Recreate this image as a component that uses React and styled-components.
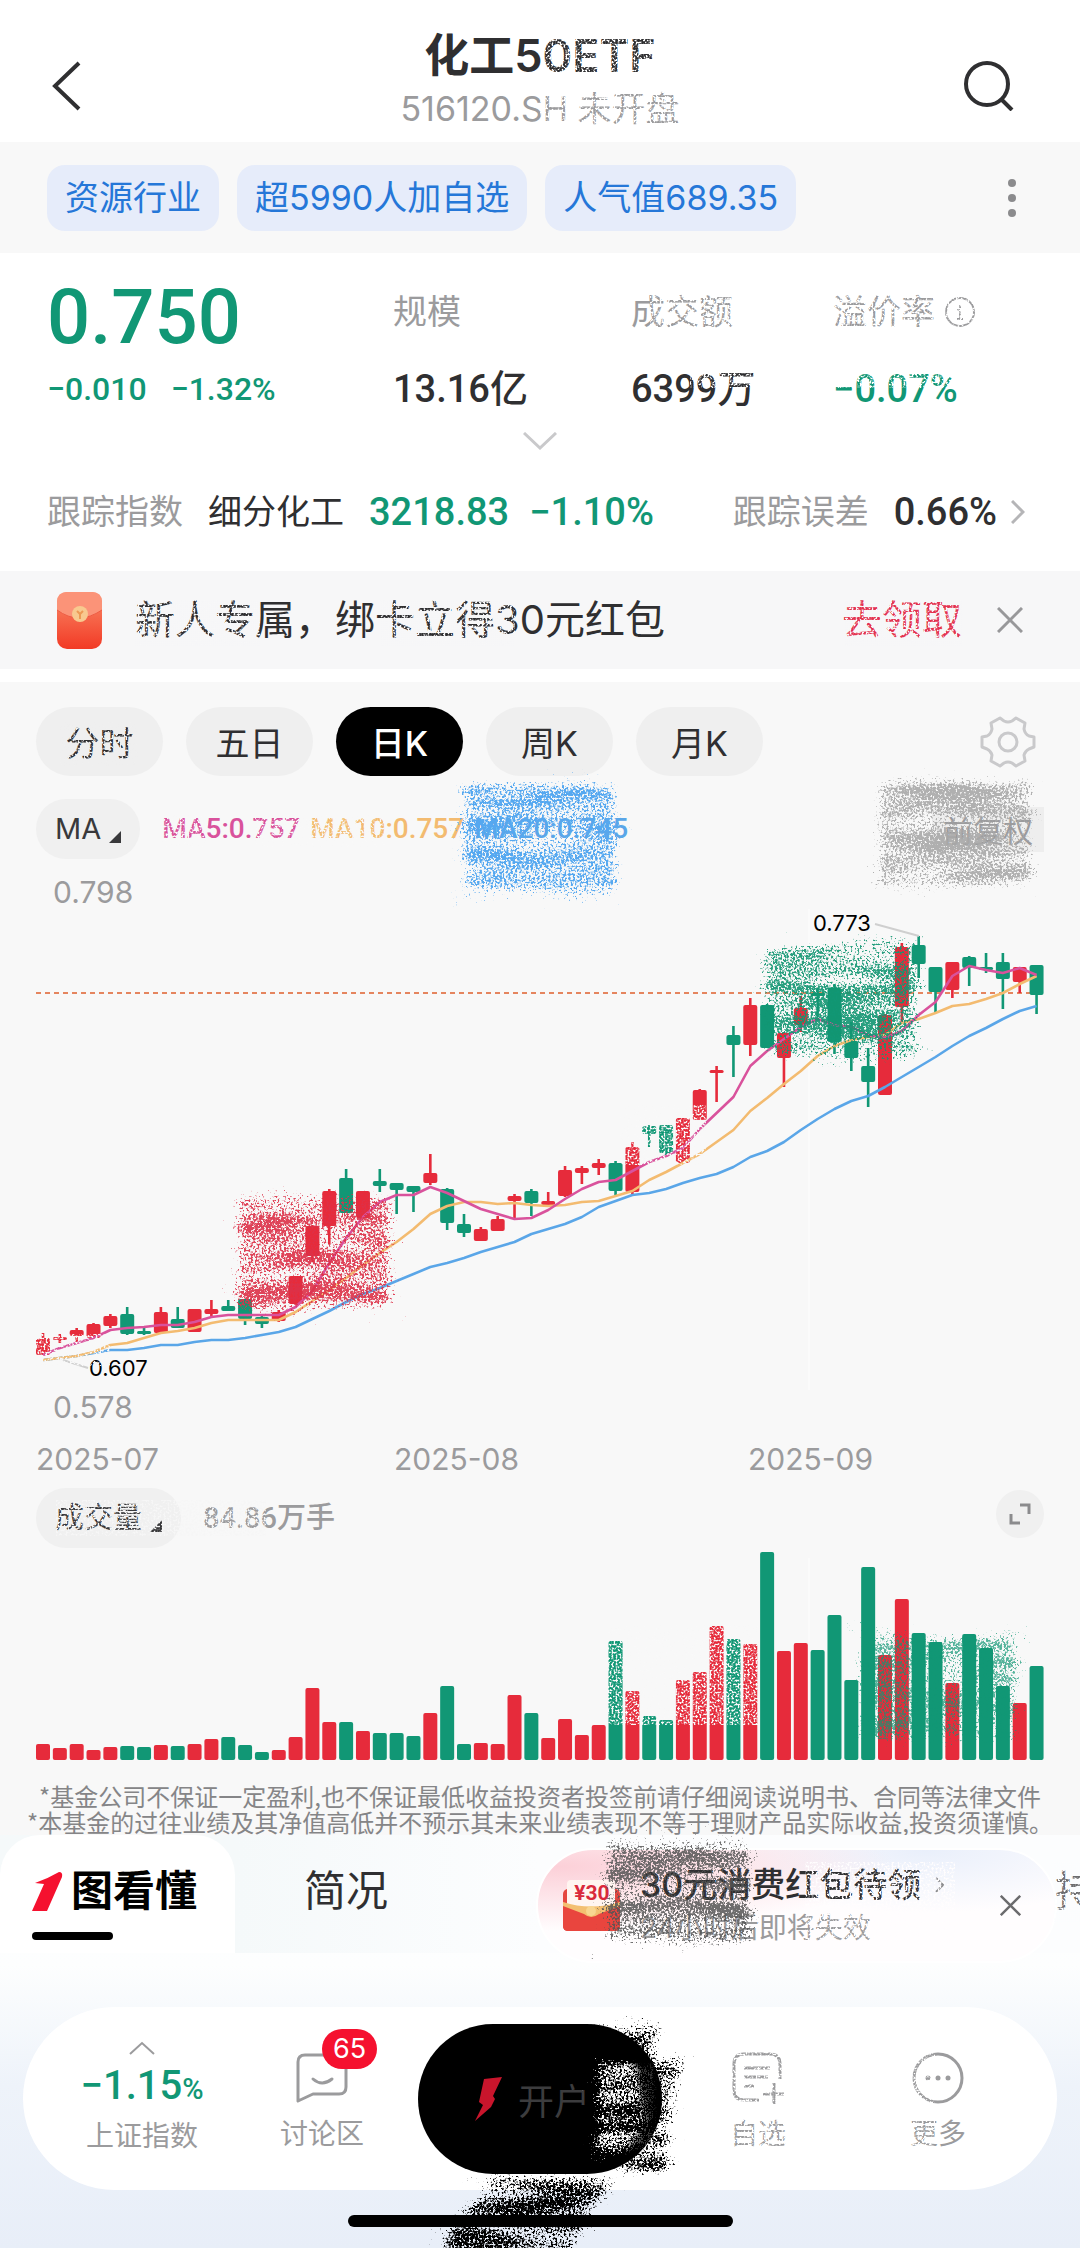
import React from 'react';
import styled, { createGlobalStyle } from 'styled-components';

const RED = '#e62b3b';
const GREEN = '#119775';
const PINK = '#d9529c';
const ORANGE = '#f3bb70';
const BLUE = '#5aa6e8';

const GlobalStyle = createGlobalStyle`
  * { box-sizing: border-box; }
  body {
    margin: 0;
    background: #ffffff;
    color: #2f2f31;
    font-family: Inter, "Noto Sans CJK SC", sans-serif;
  }
  button {
    border: 0;
    padding: 0;
    background: none;
    color: inherit;
    font: inherit;
    cursor: pointer;
  }
  a { color: inherit; text-decoration: none; }
  svg { display: block; flex: none; }
  p, h1, h2 { margin: 0; font-weight: 400; }
`;

// each candle: [up, high, body top, body bottom, low, volume]
const candles = [
  [1, 453, 458, 475, 475, 16], [1, 454, 457, 460, 463, 12], [1, 448, 450, 456, 464, 16],
  [1, 443, 444, 458, 458, 10], [1, 434, 436, 446, 448, 13], [0, 427, 434, 454, 455, 14],
  [0, 448, 451, 454, 455, 13], [1, 427, 432, 453, 453, 15], [0, 427, 439, 448, 448, 14],
  [1, 429, 429, 452, 452, 16], [1, 420, 429, 434, 436, 21], [0, 420, 426, 431, 431, 23],
  [0, 419, 419, 439, 445, 15], [0, 435, 437, 444, 448, 8], [1, 430, 432, 441, 442, 10],
  [1, 396, 396, 424, 424, 23], [1, 345, 346, 376, 382, 72], [1, 309, 311, 346, 364, 38],
  [0, 289, 298, 333, 333, 38], [1, 311, 311, 338, 338, 29], [0, 289, 301, 306, 312, 27],
  [0, 303, 303, 310, 334, 27], [0, 306, 306, 312, 332, 24], [1, 274, 293, 303, 305, 47],
  [0, 308, 309, 343, 350, 74], [0, 334, 344, 353, 357, 16], [1, 347, 349, 361, 361, 17],
  [1, 336, 339, 351, 351, 16], [1, 314, 316, 321, 339, 65], [0, 309, 311, 323, 336, 47],
  [1, 312, 321, 325, 325, 22], [1, 286, 290, 316, 317, 41], [1, 286, 288, 293, 304, 25],
  [1, 279, 283, 288, 295, 35], [0, 281, 283, 311, 315, 119], [1, 262, 267, 312, 315, 69],
  [0, 245, 246, 254, 267, 44], [0, 245, 245, 273, 277, 40], [1, 238, 238, 283, 283, 80],
  [1, 209, 210, 240, 240, 88], [1, 186, 190, 193, 222, 134], [0, 146, 155, 165, 197, 121],
  [1, 118, 125, 165, 176, 116], [0, 124, 125, 168, 168, 208], [1, 152, 153, 178, 207, 109],
  [1, 116, 128, 145, 152, 117], [0, 108, 113, 116, 137, 110], [0, 104, 108, 162, 174, 145],
  [0, 142, 161, 178, 191, 80], [0, 168, 186, 202, 227, 193], [1, 134, 135, 215, 215, 105],
  [1, 63, 67, 127, 142, 161], [0, 56, 65, 84, 98, 127], [0, 87, 87, 112, 133, 118],
  [1, 82, 82, 110, 118, 77], [0, 76, 77, 88, 106, 126], [0, 73, 87, 90, 93, 112],
  [0, 73, 82, 99, 129, 74], [1, 87, 87, 102, 113, 57], [0, 85, 85, 115, 134, 94],
];

const ma5 = [475, 468, 463, 458, 450, 448, 447, 445, 445, 442, 437, 435, 435, 435, 435, 427, 411, 383, 358, 337, 322, 315, 315, 307, 313, 321, 329, 334, 339, 338, 330, 319, 309, 302, 300, 291, 282, 276, 268, 249, 233, 217, 186, 171, 159, 147, 139, 145, 147, 155, 158, 151, 135, 122, 96, 86, 90, 93, 88, 95];
const ma10 = [480, 478, 476, 472, 465, 463, 458, 453, 451, 448, 443, 440, 440, 440, 440, 432, 421, 410, 398, 385, 373, 362, 349, 334, 326, 322, 322, 324, 323, 325, 326, 325, 322, 321, 316, 311, 300, 292, 283, 274, 262, 250, 231, 218, 204, 191, 176, 166, 160, 157, 155, 143, 139, 133, 126, 124, 119, 113, 104, 96];
const ma20 = [480, 478, 476, 473, 470, 470, 468, 465, 465, 462, 460, 460, 458, 455, 452, 447, 439, 431, 422, 414, 408, 401, 394, 387, 383, 378, 372, 367, 362, 354, 349, 344, 337, 327, 321, 315, 313, 309, 303, 298, 294, 287, 277, 271, 262, 250, 239, 229, 221, 216, 207, 197, 187, 177, 166, 156, 148, 139, 131, 126];

const TOP = 29;
const xAt = (i) => 7 + i * 16.84;
const toPoints = (list) => list.map((y, i) => `${xAt(i).toFixed(1)},${y - TOP}`).join(' ');

const Page = styled.div`
  position: relative;
  display: flex;
  flex-direction: column;
  min-height: 100vh;
  overflow: hidden;
`;

const Header = styled.header`
  display: grid;
  grid-template-columns: 1fr auto 1fr;
  align-items: start;
  padding: 31px 47px 13px;
`;

const HeaderButton = styled.button`
  justify-self: ${(p) => (p.$end ? 'end' : 'start')};
  height: 50px;
  margin: 30px ${(p) => (p.$end ? 18 : 0)}px 0 0;
`;

const Titles = styled.div`
  text-align: center;
  h1 {
    font-size: 45px;
    line-height: 50px;
    font-weight: 600;
  }
  p {
    margin-top: 8px;
    font-size: 34px;
    line-height: 40px;
    color: #9b9b9d;
  }
`;

const TagBar = styled.div`
  display: flex;
  align-items: center;
  gap: 18px;
  height: 111px;
  padding: 0 63px 0 47px;
  background: #f8f8f8;
`;

const Tag = styled.a`
  padding: 0 18px;
  border-radius: 18px;
  background: #e6ecfa;
  color: #2577d8;
  font-size: 34px;
  line-height: 66px;
  white-space: nowrap;
`;

const MoreButton = styled.button`
  margin-left: auto;
`;

const Quote = styled.section`
  padding: 32px 47px 35px;
`;

const Stats = styled.div`
  display: grid;
  grid-template-columns: 346fr 238fr 202fr 200fr;
`;

const Stat = styled.div`
  display: flex;
  flex-direction: column;
  justify-content: space-between;
  height: 126px;
`;

const Price = styled.strong`
  font: 500 76px/64px Roboto, sans-serif;
  color: ${GREEN};
`;

const Change = styled.div`
  display: flex;
  gap: 24px;
  font: 500 32px/44px Roboto, sans-serif;
  color: ${GREEN};
`;

const Label = styled.span`
  display: flex;
  align-items: center;
  gap: 10px;
  font-size: 34px;
  line-height: 54px;
  color: #9b9b9d;
  white-space: nowrap;
`;

const Value = styled.span`
  font: 500 38px/44px Roboto, "Noto Sans CJK SC", sans-serif;
  color: ${(p) => (p.$down ? GREEN : '#2f2f31')};
  white-space: nowrap;
`;

const ExpandButton = styled.button`
  display: flex;
  justify-content: center;
  align-items: center;
  width: 100%;
  height: 24px;
  margin: 18px 0 35px;
`;

const IndexRow = styled.div`
  display: flex;
  justify-content: space-between;
  height: 48px;
  padding-right: 8px;
`;

const IndexGroup = styled.div`
  display: flex;
  align-items: center;
  gap: ${(p) => p.$gap}px;
`;

const IndexName = styled.span`
  font-size: 34px;
  line-height: 48px;
  white-space: nowrap;
`;

const Banner = styled.section`
  display: flex;
  align-items: center;
  height: 98px;
  padding: 0 57px;
  background: #f7f7f8;
  font-size: 40px;
  line-height: 56px;
  white-space: nowrap;
  p { margin-left: 33px; }
  a {
    margin: 0 35px 0 auto;
    color: #e4324f;
  }
`;

const ChartPanel = styled.section`
  margin-top: 13px;
  padding: 25px 36px 0;
  background: #f8f8f8;
`;

const Periods = styled.div`
  display: flex;
  align-items: center;
  gap: 23px;
`;

const Period = styled.button`
  width: 127px;
  height: 69px;
  border-radius: 35px;
  background: ${(p) => (p.$active ? '#000000' : '#efefef')};
  color: ${(p) => (p.$active ? '#ffffff' : '#2f2f31')};
  font-size: 34px;
  font-weight: ${(p) => (p.$active ? 500 : 400)};
`;

const GearButton = styled.button`
  margin-left: auto;
  margin-right: 8px;
`;

const MaRow = styled.div`
  display: flex;
  align-items: center;
  gap: 10px;
  margin-top: 23px;
  font: 500 28px/40px Roboto, sans-serif;
`;

const Picker = styled.button`
  display: flex;
  align-items: center;
  gap: 8px;
  height: 60px;
  margin-right: 12px;
  padding: 0 19px;
  border-radius: 30px;
  background: #f0f0f0;
  color: #39393b;
  font: 400 29px/60px Inter, "Noto Sans CJK SC", sans-serif;
  svg { margin-top: 16px; }
`;

const MaValue = styled.span`
  color: ${(p) => p.$color};
`;

const Adjust = styled.button`
  margin-left: auto;
  padding: 0 11px;
  background: #eeeeee;
  color: #9b9b9d;
  font: 400 30px/45px "Noto Sans CJK SC", sans-serif;
`;

const Scale = styled.div`
  margin-top: ${(p) => p.$top || 0}px;
  padding-left: 17px;
  font-size: 30px;
  line-height: 34px;
  color: #9b9b9d;
`;

const Months = styled.div`
  display: grid;
  grid-template-columns: 358fr 354fr 296fr;
  margin: 18px 0 12px;
  font-size: 30px;
  line-height: 34px;
  color: #9b9b9d;
`;

const VolumeRow = styled.div`
  display: flex;
  align-items: center;
  height: 60px;
  span {
    margin-left: 10px;
    color: #9b9b9d;
    font: 500 29px/60px Roboto, "Noto Sans CJK SC", sans-serif;
  }
`;

const FullButton = styled.button`
  display: flex;
  align-items: center;
  justify-content: center;
  width: 48px;
  height: 48px;
  margin: 0 0 8px auto;
  border-radius: 50%;
  background: #f0f0f0;
`;

const Chart = styled.svg`
  width: 100%;
  height: auto;
  overflow: visible;
`;

const Notice = styled.div`
  margin: 23px -36px 0;
  font: 400 24px/26px "Noto Sans CJK SC", sans-serif;
  color: #858587;
  text-align: center;
  white-space: nowrap;
`;

const Bottom = styled.div`
  position: relative;
  flex: 1;
  background: linear-gradient(#f8f8f8, #fbfdfe 40px, #fdfefe 130px, #eef3fa 250px, #e8eef8);
`;

const Sections = styled.nav`
  display: flex;
  height: 118px;
  background: linear-gradient(90deg, #f5f9fa 22%, #fcfdfe 50%);
`;

const SectionTab = styled.a`
  display: flex;
  flex-direction: column;
  width: 235px;
  padding: 30px 32px 0;
  border-radius: 40px 40px 0 0;
  background: ${(p) => (p.$active ? '#ffffff' : 'none')};
  color: ${(p) => (p.$active ? '#000000' : '#2f2f31')};
  font-size: 42px;
  line-height: 52px;
  font-weight: ${(p) => (p.$active ? 600 : 400)};
  white-space: nowrap;
  span {
    display: flex;
    align-items: center;
    gap: 8px;
  }
  &:nth-child(2) { padding-left: 69px; }
  &::after {
    content: '';
    width: 81px;
    height: 8px;
    margin-top: 15px;
    border-radius: 4px;
    background: ${(p) => (p.$active ? '#000000' : 'none')};
  }
`;

const CutTab = styled.a`
  width: 25px;
  margin-left: auto;
  overflow: hidden;
  font-size: 42px;
  line-height: 112px;
  color: #6d6d6f;
  white-space: nowrap;
`;

// floating coupon, sits over the section tabs
const Coupon = styled.aside`
  position: absolute;
  top: 13px;
  right: 23px;
  display: flex;
  align-items: center;
  width: 521px;
  height: 115px;
  padding: 0 34px 0 25px;
  border: 2px solid #ffffff;
  border-radius: 58px;
  background:
    radial-gradient(ellipse at 4% 15%, #fcd0d8, rgba(255, 240, 242, 0) 48%),
    radial-gradient(ellipse at 75% 0, #e9effb, rgba(255, 255, 255, 0) 40%),
    #fffdfe;
`;

const CouponText = styled.a`
  margin-left: 20px;
  white-space: nowrap;
  strong {
    display: flex;
    align-items: center;
    gap: 14px;
    font-size: 34px;
    line-height: 44px;
    font-weight: 500;
  }
  small {
    display: block;
    font-size: 28px;
    line-height: 42px;
    color: #9b9b9d;
  }
`;

const CouponClose = styled.button`
  margin-left: auto;
`;

const ActionBar = styled.footer`
  display: flex;
  align-items: center;
  height: 183px;
  margin: 54px 23px 0;
  padding: 0 29px;
  border-radius: 92px;
  background: #ffffff;
`;

const Action = styled.button`
  position: relative;
  display: flex;
  flex: 1;
  flex-direction: column;
  align-items: center;
  color: #9b9b9d;
  font-size: 28px;
  line-height: 40px;
`;

const ActionIcon = styled.span`
  display: flex;
  align-items: center;
  height: 52px;
  margin: 9px 0 10px;
`;

const IndexChange = styled.span`
  margin: 7px 0 3px;
  color: ${GREEN};
  font: 500 40px/48px Roboto, sans-serif;
  small { font-size: 29px; }
`;

const Badge = styled.span`
  position: absolute;
  top: -14px;
  left: 50%;
  width: 55px;
  border-radius: 20px;
  background: #f5112f;
  color: #ffffff;
  font-size: 27px;
  line-height: 40px;
  text-align: center;
`;

const OpenButton = styled.button`
  display: flex;
  align-items: center;
  gap: 16px;
  width: 244px;
  height: 150px;
  margin: 0 6px;
  padding-left: 57px;
  border-radius: 75px;
  background: #000000;
  color: #3c3c3e;
  font-size: 36px;
`;

const HomeBar = styled.div`
  width: 385px;
  height: 12px;
  margin: 25px auto 21px;
  border-radius: 6px;
  background: #000000;
`;

const GrainLayer = styled.svg`
  position: absolute;
  top: 0;
  left: 0;
  width: 100%;
  height: auto;
  pointer-events: none;
`;

const Cross = ({ size, color }) => (
  <svg width={size} height={size} viewBox="0 0 26 26" fill="none" stroke={color} strokeWidth="3">
    <path d="M1 1L25 25M25 1L1 25" />
  </svg>
);

const Corner = () => (
  <svg width="12" height="12" viewBox="0 0 12 12" fill="#39393b">
    <path d="M12 0V12H0Z" />
  </svg>
);

const PriceChart = () => (
  <Chart viewBox="0 0 1008 481">
    <path d="M773 0V481" stroke="#fbfbfb" strokeWidth="2" />
    <path d="M0 84H1002" stroke="#e5855f" strokeWidth="2" strokeDasharray="5 4" />
    {candles.map(([up, high, top, bottom, low], i) => (
      <g key={i} fill={up ? RED : GREEN}>
        <rect x={xAt(i) - 1.3} y={high - TOP} width="2.6" height={low - high} />
        <rect x={xAt(i) - 7} y={top - TOP} width="14" height={bottom - top} rx={Math.min(2, (bottom - top) / 2)} />
      </g>
    ))}
    <g fill="none" strokeWidth="2.6" strokeLinejoin="round">
      <polyline points={toPoints(ma20)} stroke={BLUE} />
      <polyline points={toPoints(ma10)} stroke={ORANGE} />
      <polyline points={toPoints(ma5)} stroke={PINK} />
    </g>
    <path d="M839 15L883 27M27 451L52 459" stroke="#cfcfcf" strokeWidth="2" />
    <g fill="#000000" fontSize="22">
      <text x="777" y="22">0.773</text>
      <text x="53" y="467">0.607</text>
    </g>
  </Chart>
);

const VolumeChart = () => (
  <Chart viewBox="0 0 1008 212">
    <path d="M773 10V212" stroke="#fbfbfb" strokeWidth="2" />
    {candles.map((c, i) => (
      <rect key={i} x={xAt(i) - 7} y={212 - c[5]} width="14" height={c[5]} rx="2" fill={c[0] ? RED : GREEN} />
    ))}
  </Chart>
);

// crayon patches: [x, y, width, height, colour, opacity]
const patches = [
  [462, 783, 156, 112, '#55a8f0', 1],
  [877, 780, 156, 108, '#a9a9a9', 0.9],
  [236, 1196, 156, 115, '#dd3148', 0.9],
  [764, 944, 155, 112, '#129672', 0.9],
  [861, 1634, 156, 106, '#119775', 0.7],
  [604, 1837, 148, 108, '#555555', 0.85],
];

// lighter rubbed-out spots over text and candles
const rubs = [
  [545, 35, 115, 42, '#ffffff'],
  [540, 92, 145, 38, '#ffffff'],
  [650, 294, 330, 40, '#ffffff'],
  [690, 366, 268, 22, '#ffffff'],
  [135, 600, 125, 46, '#f7f7f8'],
  [380, 600, 135, 46, '#f7f7f8'],
  [845, 600, 118, 46, '#f7f7f8'],
  [60, 722, 78, 44, '#efefef'],
  [160, 815, 48, 32, '#f8f8f8'],
  [255, 815, 130, 32, '#f8f8f8'],
  [36, 1334, 74, 32, '#f8f8f8'],
  [620, 1105, 86, 60, '#f8f8f8'],
  [608, 1625, 150, 100, '#f8f8f8'],
  [56, 1500, 210, 36, '#f6f6f6'],
  [805, 1862, 150, 84, '#fffdfe'],
  [1054, 1862, 26, 60, '#fcfdfe'],
  [725, 2050, 80, 100, '#ffffff'],
  [905, 2050, 30, 100, '#ffffff'],
];

const Grain = () => (
  <GrainLayer viewBox="0 0 1080 2248" aria-hidden="true">
    <defs>
      <filter id="crayon" x="-20%" y="-20%" width="140%" height="140%" colorInterpolationFilters="sRGB">
        <feTurbulence type="fractalNoise" baseFrequency="0.45 0.5" numOctaves="2" seed="9" result="fine" />
        <feTurbulence type="fractalNoise" baseFrequency="0.01 0.06" numOctaves="2" seed="5" result="streak" />
        <feGaussianBlur in="SourceGraphic" stdDeviation="6" result="soft" />
        <feComposite in="fine" in2="streak" operator="arithmetic" k2="1" k3="0.5" k4="-0.25" result="noise" />
        <feComposite in="noise" in2="soft" operator="arithmetic" k2="1" k3="0.4" k4="-0.4" />
        <feColorMatrix values="0 0 0 0 0  0 0 0 0 0  0 0 0 0 0  0 0 0 7 -3" result="dots" />
        <feMorphology in="SourceGraphic" operator="dilate" radius="14" />
        <feComposite in2="dots" operator="in" />
      </filter>
      <filter id="rub" x="-5%" y="-5%" width="110%" height="110%" colorInterpolationFilters="sRGB">
        <feTurbulence type="fractalNoise" baseFrequency="0.5" numOctaves="2" seed="2" />
        <feColorMatrix values="0 0 0 0 0  0 0 0 0 0  0 0 0 0 0  0 0 0 6 -2.8" result="dots" />
        <feComposite in="SourceGraphic" in2="dots" operator="in" />
      </filter>
    </defs>
    {rubs.map(([x, y, w, h, fill], i) => (
      <rect key={i} x={x} y={y} width={w} height={h} fill={fill} filter="url(#rub)" />
    ))}
    {patches.map(([x, y, w, h, fill, opacity], i) => (
      <rect key={i} x={x} y={y} width={w} height={h} fill={fill} opacity={opacity} filter="url(#crayon)" />
    ))}
    <rect x="595" y="2060" width="66" height="96" fill="#ffffff" filter="url(#crayon)" />
    <path d="M560 2024H665L650 2060H685L672 2115L668 2176H610L640 2120L630 2050Z" fill="#000000" filter="url(#crayon)" />
    <path d="M495 2176H622L595 2210L570 2260H432L470 2200Z" fill="#000000" filter="url(#crayon)" />
  </GrainLayer>
);

export default function App() {
  return (
    <Page>
      <GlobalStyle />
      <Header>
        <HeaderButton aria-label="返回">
          <svg width="40" height="50" viewBox="0 0 40 50" fill="none" stroke="#2f2f31" strokeWidth="4">
            <path d="M32 2L8 25L32 48" />
          </svg>
        </HeaderButton>
        <Titles>
          <h1>化工50ETF</h1>
          <p>516120.SH 未开盘</p>
        </Titles>
        <HeaderButton $end aria-label="搜索">
          <svg width="52" height="50" viewBox="0 0 52 50" fill="none" stroke="#2f2f31" strokeWidth="4">
            <circle cx="24" cy="23" r="21" />
            <path d="M38 38L49 49" />
          </svg>
        </HeaderButton>
      </Header>

      <TagBar>
        <Tag href="#industry">资源行业</Tag>
        <Tag href="#watch">超5990人加自选</Tag>
        <Tag href="#hot">人气值689.35</Tag>
        <MoreButton aria-label="更多标签">
          <svg width="10" height="40" viewBox="0 0 10 40" fill="#8b8b8d">
            <circle cx="5" cy="5" r="4" />
            <circle cx="5" cy="20" r="4" />
            <circle cx="5" cy="35" r="4" />
          </svg>
        </MoreButton>
      </TagBar>

      <Quote>
        <Stats>
          <Stat>
            <Price>0.750</Price>
            <Change><span>−0.010</span><span>−1.32%</span></Change>
          </Stat>
          <Stat>
            <Label>规模</Label>
            <Value>13.16亿</Value>
          </Stat>
          <Stat>
            <Label>成交额</Label>
            <Value>6399万</Value>
          </Stat>
          <Stat>
            <Label>
              溢价率
              <svg width="30" height="30" viewBox="0 0 30 30" fill="none" stroke="#9b9b9d" strokeWidth="2">
                <circle cx="15" cy="15" r="14" />
                <path d="M15 13V22M15 8V11M12 22H18M12 13H15" />
              </svg>
            </Label>
            <Value $down>−0.07%</Value>
          </Stat>
        </Stats>
        <ExpandButton aria-label="展开">
          <svg width="34" height="18" viewBox="0 0 34 18" fill="none" stroke="#c9c9cb" strokeWidth="3">
            <path d="M1 1L17 16L33 1" />
          </svg>
        </ExpandButton>
        <IndexRow>
          <IndexGroup $gap={25}>
            <Label>跟踪指数</Label>
            <IndexName>细分化工</IndexName>
            <IndexGroup $gap={20}>
              <Value $down>3218.83</Value>
              <Value $down>−1.10%</Value>
            </IndexGroup>
          </IndexGroup>
          <IndexGroup $gap={25}>
            <Label>跟踪误差</Label>
            <IndexGroup $gap={14}>
              <Value>0.66%</Value>
              <svg width="14" height="24" viewBox="0 0 14 24" fill="none" stroke="#b5b5b7" strokeWidth="3">
                <path d="M1 1L12 12L1 23" />
              </svg>
            </IndexGroup>
          </IndexGroup>
        </IndexRow>
      </Quote>

      <Banner>
        <svg width="45" height="57" viewBox="0 0 45 57">
          <defs>
            <linearGradient id="packet" x1="0" y1="0" x2="0" y2="1">
              <stop offset="0" stopColor="#f98a68" />
              <stop offset="1" stopColor="#f23a25" />
            </linearGradient>
          </defs>
          <rect width="45" height="57" rx="10" fill="url(#packet)" />
          <path d="M0 18V10Q0 0 10 0H35Q45 0 45 10V18Q34 26 22 26T0 18Z" fill="#fb9378" />
          <path d="M0 18Q11 26 22 26T45 18" fill="none" stroke="#ee5a42" strokeWidth="1" />
          <circle cx="23" cy="22" r="8" fill="#f8c98f" />
          <path d="M20 19L23 22L26 19M23 22V27" fill="none" stroke="#ed9a55" strokeWidth="2" />
        </svg>
        <p>新人专属，绑卡立得30元红包</p>
        <a href="#claim">去领取</a>
        <button aria-label="关闭"><Cross size={26} color="#98989a" /></button>
      </Banner>

      <ChartPanel>
        <Periods>
          <Period>分时</Period>
          <Period>五日</Period>
          <Period $active>日K</Period>
          <Period>周K</Period>
          <Period>月K</Period>
          <GearButton aria-label="设置">
            <svg width="56" height="52" viewBox="0 0 56 52" fill="none" stroke="#c9c9cb" strokeWidth="3" strokeLinejoin="round">
              <path d="M20 2L24 5Q28 7 32 5L36 2L45 7L44 13Q45 18 49 20L54 21V31L49 33Q45 35 44 39L45 45L36 50L32 47Q28 45 24 47L20 50L11 45L12 39Q11 35 7 33L2 31V21L7 20Q11 18 12 13L11 7Z" />
              <circle cx="28" cy="26" r="9" />
            </svg>
          </GearButton>
        </Periods>
        <MaRow>
          <Picker>MA<Corner /></Picker>
          <MaValue $color={PINK}>MA5:0.757</MaValue>
          <MaValue $color={ORANGE}>MA10:0.757</MaValue>
          <MaValue $color={BLUE}>MA20:0.745</MaValue>
          <Adjust>前复权</Adjust>
        </MaRow>
        <Scale $top={16}>0.798</Scale>
        <PriceChart />
        <Scale>0.578</Scale>
        <Months>
          <span>2025-07</span>
          <span>2025-08</span>
          <span>2025-09</span>
        </Months>
        <VolumeRow>
          <Picker>成交量<Corner /></Picker>
          <span>84.86万手</span>
          <FullButton aria-label="全屏">
            <svg width="22" height="22" viewBox="0 0 22 22" fill="none" stroke="#8b8b8d" strokeWidth="3">
              <path d="M11 2H20V11M2 11V20H11" />
            </svg>
          </FullButton>
        </VolumeRow>
        <VolumeChart />
        <Notice>
          <p>*基金公司不保证一定盈利,也不保证最低收益投资者投签前请仔细阅读说明书、合同等法律文件</p>
          <p>*本基金的过往业绩及其净值高低并不预示其未来业绩表现不等于理财产品实际收益,投资须谨慎。</p>
        </Notice>
      </ChartPanel>

      <Bottom>
        <Sections>
          <SectionTab href="#guide" $active>
            <span>
              <svg width="31" height="39" viewBox="0 0 31 39" fill="#f5112f">
                <path d="M3 11Q15 7 27 0Q31 0 30 5L15 39H0L12 12Z" />
              </svg>
              图看懂
            </span>
          </SectionTab>
          <SectionTab href="#profile">简况</SectionTab>
          <CutTab href="#holding">持</CutTab>
        </Sections>
        <Coupon>
          <svg width="57" height="52" viewBox="0 0 57 52">
            <rect x="0" y="9" width="57" height="42" rx="5" fill="#e5473f" />
            <rect x="4" y="0" width="48" height="34" rx="4" fill="#fff5f0" />
            <text x="29" y="20" fill="#d9293c" fontSize="21" fontWeight="700" fontFamily="Roboto" textAnchor="middle">¥30</text>
            <path d="M0 24Q28 34 57 24V46Q57 51 52 51H5Q0 51 0 46Z" fill="#e9453e" />
            <path d="M0 22Q28 31 57 22V26L36 34Q28 40 21 34L0 26Z" fill="#f3c071" />
            <circle cx="28" cy="31" r="5" fill="#f8d691" />
          </svg>
          <CouponText href="#coupon">
            <strong>
              30元消费红包待领
              <svg width="9" height="16" viewBox="0 0 9 16" fill="none" stroke="#8b8b8d" strokeWidth="2">
                <path d="M1 1L8 8L1 15" />
              </svg>
            </strong>
            <small>24小时后即将失效</small>
          </CouponText>
          <CouponClose aria-label="关闭"><Cross size={21} color="#6b6b6d" /></CouponClose>
        </Coupon>

        <ActionBar>
          <Action>
            <svg width="26" height="14" viewBox="0 0 26 14" fill="none" stroke="#9b9b9d" strokeWidth="2">
              <path d="M1 13L13 2L25 13" />
            </svg>
            <IndexChange>−1.15<small>%</small></IndexChange>
            上证指数
          </Action>
          <Action>
            <ActionIcon>
              <svg width="52" height="50" viewBox="0 0 52 50" fill="none" stroke="#9b9b9d" strokeWidth="3" strokeLinejoin="round">
                <path d="M2 48V9Q2 2 9 2H43Q50 2 50 9V34Q50 41 43 41H17Z" />
                <path d="M17 26Q26 34 36 26" strokeLinecap="round" />
              </svg>
            </ActionIcon>
            讨论区
            <Badge>65</Badge>
          </Action>
          <OpenButton>
            <svg width="27" height="44" viewBox="0 0 27 44" fill="#c9152c">
              <path d="M9 2L27 0L18 19L20 22L16 30L0 44L8 28L4 25Z" />
            </svg>
            开户
          </OpenButton>
          <Action>
            <ActionIcon>
              <svg width="52" height="52" viewBox="0 0 52 52" fill="none" stroke="#9b9b9d" strokeWidth="3">
                <path d="M48 27V12Q48 2 38 2H12Q2 2 2 12V38Q2 48 12 48H27M12 16H38M12 25H36M12 34H22M42 31V52M31 42H52" />
              </svg>
            </ActionIcon>
            自选
          </Action>
          <Action>
            <ActionIcon>
              <svg width="52" height="52" viewBox="0 0 52 52" fill="none" stroke="#9b9b9d" strokeWidth="3">
                <circle cx="26" cy="26" r="24" />
                <g fill="#9b9b9d" stroke="none">
                  <circle cx="16" cy="26" r="2.5" />
                  <circle cx="26" cy="26" r="2.5" />
                  <circle cx="36" cy="26" r="2.5" />
                </g>
              </svg>
            </ActionIcon>
            更多
          </Action>
        </ActionBar>
        <HomeBar />
      </Bottom>
      <Grain />
    </Page>
  );
}
